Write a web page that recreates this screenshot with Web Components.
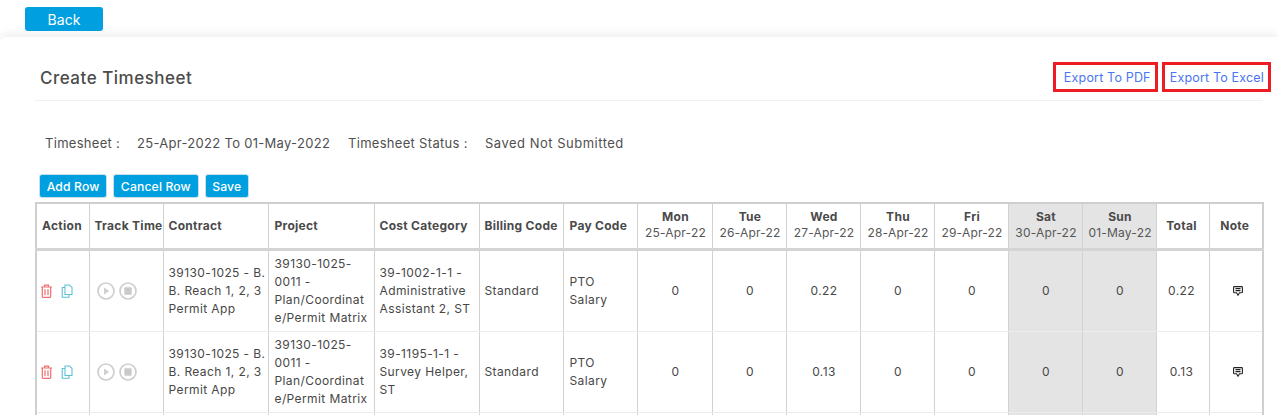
<!DOCTYPE html>
<html>
<head>
<meta charset="utf-8">
<title>Create Timesheet</title>
<style>
  html, body { margin: 0; height: 415px; overflow: hidden; background: #fff; }
  body { font-family: Inter, "Liberation Sans", sans-serif; color: #4a4a4a; font-size: 12px; }
  ts-button.back { margin: 7px 0 6px 25px; }
</style>
</head>
<body>
<ts-button class="back" big>Back</ts-button>
<ts-card>
  <ts-header title="Create Timesheet">
    <ts-export style="padding: 0 4px 0 8px">Export To PDF</ts-export>
    <ts-export style="padding: 0 4px 0 5px">Export To Excel</ts-export>
  </ts-header>
  <ts-info></ts-info>
  <ts-toolbar>
    <ts-button>Add Row</ts-button>
    <ts-button>Cancel Row</ts-button>
    <ts-button>Save</ts-button>
  </ts-toolbar>
  <ts-table></ts-table>
</ts-card>

<script>
class TsButton extends HTMLElement {
  constructor() {
    super();
    this.attachShadow({ mode: 'open' });
    this.shadowRoot.innerHTML = `
      <style>
        :host { display: inline-block; }
        button {
          display: block; height: 24px; padding: 0 6.7px;
          background: #009fdf; color: #fff; border: 1px solid #c9dfe9; border-radius: 3px;
          font: 500 12.2px Inter, "Liberation Sans", sans-serif; letter-spacing: .13px; white-space: nowrap;
        }
        :host([big]) button { width: 78px; border: 0; border-radius: 3px; font-size: 14px; font-weight: 400; }
      </style>
      <button><slot></slot></button>`;
  }
}

class TsCard extends HTMLElement {
  constructor() {
    super();
    this.attachShadow({ mode: 'open' });
    this.shadowRoot.innerHTML = `
      <style>
        :host {
          display: block; height: 378px; box-sizing: border-box; padding: 0 14px 0 35px;
          background: #fff; border-radius: 6px 0 0 0; overflow: hidden;
          box-shadow: 0 -3px 10px rgba(0,0,0,.07);
        }
      </style>
      <slot></slot>`;
  }
}

class TsHeader extends HTMLElement {
  constructor() {
    super();
    this.attachShadow({ mode: 'open' });
    this.shadowRoot.innerHTML = `
      <style>
        :host {
          display: flex; justify-content: space-between; align-items: center;
          height: 64px; box-sizing: border-box; padding: 0 0 0 5px;
          border-bottom: 1px solid #f0f0f0; margin-right: 1px;
        }
        h1 { margin: 0; font: 500 17px Inter, "Liberation Sans", sans-serif; color: #4c4c4c; letter-spacing: .5px; position: relative; top: 9px; }
        .links { display: flex; gap: 4px; margin-top: 17px; margin-right: -8px; }
      </style>
      <h1>${this.getAttribute('title')}</h1>
      <div class="links"><slot></slot></div>`;
  }
}

class TsExport extends HTMLElement {
  constructor() {
    super();
    this.attachShadow({ mode: 'open' });
    this.shadowRoot.innerHTML = `
      <style>
        :host {
          display: block; box-sizing: border-box; height: 30px; line-height: 25px;
          border: 3px solid #ed1c24; color: #4a76f0; font-size: 12.5px; letter-spacing: .18px; white-space: nowrap;
        }
      </style>
      <slot></slot>`;
  }
}

class TsInfo extends HTMLElement {
  constructor() {
    super();
    this.attachShadow({ mode: 'open' });
    this.shadowRoot.innerHTML = `
      <style>
        :host {
          display: grid; grid-template-columns: 92px 211px 137px auto; justify-content: start;
          padding: 32px 0 0 10px; height: 41px; line-height: 20px;
          font-size: 13px; letter-spacing: .3px; color: #4f4f4f;
        }
        span:last-child { letter-spacing: .5px; }
      </style>
      <span>Timesheet :</span>
      <span>25-Apr-2022 To 01-May-2022</span>
      <span>Timesheet Status :</span>
      <span>Saved Not Submitted</span>`;
  }
}

class TsToolbar extends HTMLElement {
  constructor() {
    super();
    this.attachShadow({ mode: 'open' });
    this.shadowRoot.innerHTML = `
      <style>:host { display: flex; gap: 6px; padding: 0 0 4px 4px; }</style>
      <slot></slot>`;
  }
}

const trashIcon = `<svg width="13" height="14" viewBox="0 0 13 14" fill="none" stroke="#ef6f73" stroke-width="1.2"><path d="M1 3h11M4.500 3V1.200h4V3M2.300 3v9.600c0 .4.3.7.7.7h7c.4 0 .7-.3.7-.7V3M5 5.200v6M8 5.200v6"/></svg>`;
const copyIcon = `<svg width="12" height="14" viewBox="0 0 12 14" fill="none" stroke="#5cc1d8" stroke-width="1.1"><path d="M4 1h4.500L11 3.400V10.500H4z"/><path d="M4 3.500H1.200v9.800H8v-2.800"/></svg>`;
const playIcon = `<svg width="18" height="18" viewBox="0 0 18 18" fill="none"><circle cx="9" cy="9" r="8" stroke="#cfcfcf" stroke-width="1.7"/><path d="M7 5.600v6.800l5.200-3.400z" fill="#d0d0d0"/></svg>`;
const stopIcon = `<svg width="18" height="18" viewBox="0 0 18 18" fill="none"><circle cx="9" cy="9" r="8" stroke="#cfcfcf" stroke-width="1.7"/><rect x="5.300" y="5.300" width="7.400" height="7.400" rx="1" fill="#cacaca"/></svg>`;
const noteIcon = `<svg width="10" height="11" viewBox="0 0 10 11" fill="none" stroke="#222" stroke-width="1.1"><path d="M1.400.6h7.200c.5 0 .8.3.8.8v4.600c0 .5-.3.8-.8.8H6.600L5 9.200 3.600 6.800H1.400C.9 6.800.6 6.500.6 6V1.400C.6.900.9.600 1.400.600z"/><path d="M2.500 2.600h5M2.500 4.600h5"/></svg>`;

class TsTable extends HTMLElement {
  constructor() {
    super();
    this.attachShadow({ mode: 'open' });
    const widths = [53, 74, 105, 106, 105, 84, 74, 75, 74, 74, 74, 74, 74, 74, 53, 54];
    const days = [['Mon', '25-Apr-22'], ['Tue', '26-Apr-22'], ['Wed', '27-Apr-22'], ['Thu', '28-Apr-22'],
      ['Fri', '29-Apr-22'], ['Sat', '30-Apr-22'], ['Sun', '01-May-22']];
    const rows = [
      { category: '39-1002-1-1 -<br>Administrative<br>Assistant 2, ST', hours: ['0', '0', '0.22', '0', '0', '0', '0'], total: '0.22' },
      { category: '39-1195-1-1 -<br>Survey Helper,<br>ST', hours: ['0', '0', '0.13', '0', '0', '0', '0'], total: '0.13' },
    ];
    const head = ['Action', 'Track Time', 'Contract', 'Project', 'Cost Category', 'Billing Code', 'Pay Code']
      .map((h) => `<th>${h}</th>`).join('')
      + days.map(([d, date], i) => `<th class="day ${i > 4 ? 'off' : ''}">${d}<small>${date}</small></th>`).join('')
      + `<th class="day total">Total</th><th class="day total">Note</th>`;
    const body = rows.map((r) => `
      <tr>
        <td><div class="icons action">${trashIcon}${copyIcon}</div></td>
        <td><div class="icons track">${playIcon}${stopIcon}</div></td>
        <td>39130-1025 - B.<br>B. Reach 1, 2, 3<br>Permit App</td>
        <td>39130-1025-<br>0011 -<br>Plan/Coordinat<br>e/Permit Matrix</td>
        <td>${r.category}</td>
        <td>Standard</td>
        <td>PTO<br>Salary</td>
        ${r.hours.map((h, i) => `<td class="num ${i > 4 ? 'off' : ''}">${h}</td>`).join('')}
        <td class="num total">${r.total}</td>
        <td class="num note">${noteIcon}</td>
      </tr>`).join('');
    const blank = `<tr class="blank">${widths.map((w, i) => `<td class="${i === 12 || i === 13 ? 'off' : ''}"></td>`).join('')}</tr>`;
    this.shadowRoot.innerHTML = `
      <style>
        :host { display: block; font-size: 12px; letter-spacing: .4px; color: #474747; }
        table { border-collapse: collapse; table-layout: fixed; width: 1227px; border: 2px solid #cfcfcf; border-bottom: 0; }
        th, td { border: 1px solid #d2d2d2; padding: 0 5px; text-align: left; vertical-align: middle; overflow: hidden; white-space: nowrap; }
        th { height: 43px; padding-bottom: 1px; font-weight: 700; font-size: 12px; color: #4a4a4a; border-bottom: 3px solid #d4d4d4; letter-spacing: .28px; }
        td { height: 80px; line-height: 18px; border-top-color: #ececec; border-bottom-color: #ececec; }
        th:nth-child(4), td:nth-child(4), th:nth-child(7), td:nth-child(7) { padding-left: 6px; padding-right: 0; }
        th.day, td.num { text-align: center; padding-left: 6px; padding-right: 4px; }
        th.total, td.total { padding-left: 5px; padding-right: 7px; }
        small { display: block; font-size: 12px; font-weight: 400; line-height: 18px; letter-spacing: .2px; color: #565656; }
        .off { background: #e4e4e4; }
        .icons { display: flex; align-items: center; }
        .action { gap: 8px; margin-left: -2px; margin-top: -1px; }
        .track { gap: 4px; padding-left: 2px; margin-top: -1px; }
        .note svg { display: block; margin: 0 auto; position: relative; left: 1px; }
        .blank td { height: 20px; }
      </style>
      <table>
        <colgroup>${widths.map((w) => `<col style="width:${w}px">`).join('')}</colgroup>
        <thead><tr>${head}</tr></thead>
        <tbody>${body}${blank}</tbody>
      </table>`;
  }
}

customElements.define('ts-button', TsButton);
customElements.define('ts-card', TsCard);
customElements.define('ts-header', TsHeader);
customElements.define('ts-export', TsExport);
customElements.define('ts-info', TsInfo);
customElements.define('ts-toolbar', TsToolbar);
customElements.define('ts-table', TsTable);
</script>
</body>
</html>
